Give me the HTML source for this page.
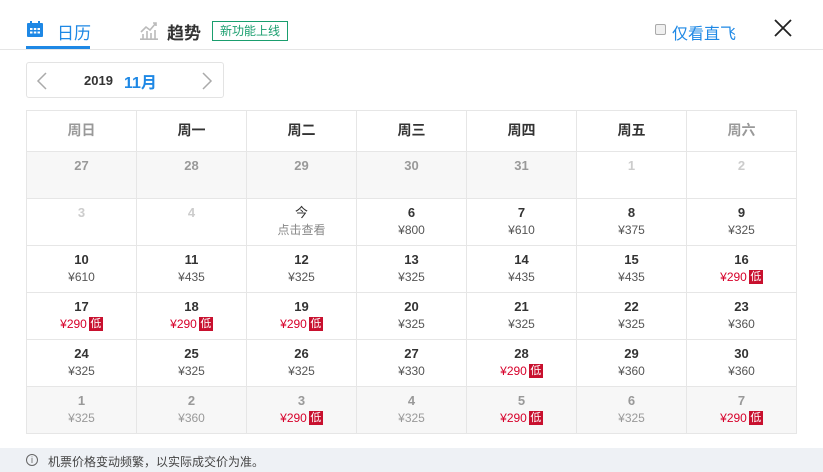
<!DOCTYPE html>
<html><head><meta charset="utf-8"><style>
*{margin:0;padding:0;box-sizing:border-box}
body{width:823px;height:472px;background:#fff;font-family:"Liberation Sans","Noto Sans CJK SC",sans-serif;position:relative;overflow:hidden;color:#333}
.a{position:absolute}
table{position:absolute;left:26px;top:110px;border-collapse:collapse;table-layout:fixed;width:770px}
td,th{border:1px solid #e6e6e6;width:110px;text-align:center;vertical-align:top;height:47px;padding-top:6px;font-size:13px;line-height:16px}
th{height:41px;font-weight:bold;font-size:14px;padding-top:11px;color:#333}
th.g{color:#999}
td b{display:block;font-size:13px;color:#333}
td span{display:block;font-size:12px;color:#555;line-height:16px;margin-top:1px;height:16px}
td.gr{background:#f7f7f7}
td.gr b,td.gr span{color:#999}
td.lt b{color:#ccc}
td span.r{color:#d7002a}
i{display:inline-block;font-style:normal;background:#c8102e;color:#fff;font-size:11px;line-height:14px;width:14px;height:14px;vertical-align:top;margin-top:1px;margin-left:2px}
</style></head><body>
<svg class="a" style="left:26px;top:20px" width="18" height="18" viewBox="0 0 18 18"><rect x="1" y="3" width="16" height="14" rx="1" fill="#1e88e5"/><rect x="4" y="1" width="2" height="4" fill="#1e88e5"/><rect x="12" y="1" width="2" height="4" fill="#1e88e5"/><g fill="#fff"><rect x="4" y="8" width="2.5" height="2"/><rect x="7.8" y="8" width="2.5" height="2"/><rect x="11.5" y="8" width="2.5" height="2"/><rect x="4" y="11.5" width="2.5" height="2"/><rect x="7.8" y="11.5" width="2.5" height="2"/><rect x="11.5" y="11.5" width="2.5" height="2"/></g></svg>
<div class="a" style="left:57px;top:19px;font-size:17px;color:#1e88e5">日历</div>
<div class="a" style="left:26px;top:46px;width:64px;height:3px;background:#1e88e5"></div>
<svg class="a" style="left:139px;top:20px" width="20" height="20" viewBox="0 0 20 20" fill="none" stroke="#bbb" stroke-width="1.6"><path d="M2 12 L7 7 L11 10 L17 3 M14 3 H17 V6"/><path d="M4 19 V14 M8 19 V11 M12 19 V13 M16 19 V10 M1 19.2 H19"/></svg>
<div class="a" style="left:167px;top:19px;font-size:17px;color:#333;font-weight:bold">趋势</div>
<div class="a" style="left:212px;top:21px;width:76px;height:20px;border:1px solid #1a9e6e;color:#1a9e6e;font-size:12px;line-height:18px;text-align:center">新功能上线</div>
<div class="a" style="left:655px;top:24px;width:11px;height:11px;border:1px solid #aaa;border-radius:2px;background:#f0f0f0"></div>
<div class="a" style="left:672px;top:20px;font-size:16px;color:#1e88e5">仅看直飞</div>
<svg class="a" style="left:773px;top:18px" width="20" height="20" viewBox="0 0 20 20" stroke="#222" stroke-width="1.8"><path d="M2 2 L18 18 M18 2 L2 18"/></svg>
<div class="a" style="left:0;top:49px;width:823px;height:1px;background:#e5e5e5"></div>
<div class="a" style="left:26px;top:62px;width:198px;height:36px;border:1px solid #e3e3e3;border-radius:3px"></div>
<svg class="a" style="left:36px;top:72px" width="12" height="18" viewBox="0 0 12 18" fill="none" stroke="#aaa" stroke-width="1.5"><path d="M10 1 L2 9 L10 17"/></svg>
<svg class="a" style="left:201px;top:72px" width="12" height="18" viewBox="0 0 12 18" fill="none" stroke="#aaa" stroke-width="1.5"><path d="M2 1 L10 9 L2 17"/></svg>
<div class="a" style="left:84px;top:73px;font-size:13px;font-weight:bold;color:#333">2019</div>
<div class="a" style="left:124px;top:69px;font-size:16px;font-weight:bold;color:#1e88e5">11月</div>
<table>
<tr><th class="g">周日</th><th>周一</th><th>周二</th><th>周三</th><th>周四</th><th>周五</th><th class="g">周六</th></tr>
<tr><td class="gr"><b>27</b></td><td class="gr"><b>28</b></td><td class="gr"><b>29</b></td><td class="gr"><b>30</b></td><td class="gr"><b>31</b></td><td class="lt"><b>1</b></td><td class="lt"><b>2</b></td></tr>
<tr><td class="lt"><b>3</b></td><td class="lt"><b>4</b></td><td><b style="font-weight:normal">今</b><span style="color:#888">点击查看</span></td><td><b>6</b><span>¥800</span></td><td><b>7</b><span>¥610</span></td><td><b>8</b><span>¥375</span></td><td><b>9</b><span>¥325</span></td></tr>
<tr><td><b>10</b><span>¥610</span></td><td><b>11</b><span>¥435</span></td><td><b>12</b><span>¥325</span></td><td><b>13</b><span>¥325</span></td><td><b>14</b><span>¥435</span></td><td><b>15</b><span>¥435</span></td><td><b>16</b><span class="r">¥290<i>低</i></span></td></tr>
<tr><td><b>17</b><span class="r">¥290<i>低</i></span></td><td><b>18</b><span class="r">¥290<i>低</i></span></td><td><b>19</b><span class="r">¥290<i>低</i></span></td><td><b>20</b><span>¥325</span></td><td><b>21</b><span>¥325</span></td><td><b>22</b><span>¥325</span></td><td><b>23</b><span>¥360</span></td></tr>
<tr><td><b>24</b><span>¥325</span></td><td><b>25</b><span>¥325</span></td><td><b>26</b><span>¥325</span></td><td><b>27</b><span>¥330</span></td><td><b>28</b><span class="r">¥290<i>低</i></span></td><td><b>29</b><span>¥360</span></td><td><b>30</b><span>¥360</span></td></tr>
<tr><td class="gr"><b>1</b><span>¥325</span></td><td class="gr"><b>2</b><span>¥360</span></td><td class="gr"><b>3</b><span class="r" style="color:#d7002a">¥290<i>低</i></span></td><td class="gr"><b>4</b><span>¥325</span></td><td class="gr"><b>5</b><span class="r" style="color:#d7002a">¥290<i>低</i></span></td><td class="gr"><b>6</b><span>¥325</span></td><td class="gr"><b>7</b><span class="r" style="color:#d7002a">¥290<i>低</i></span></td></tr>
</table>
<div class="a" style="left:0;top:448px;width:823px;height:24px;background:#eef1f5"></div>
<div class="a" style="left:26px;top:454px;width:12px;height:12px;border:1px solid #666;border-radius:50%;font-size:9px;line-height:10px;text-align:center;color:#666">i</div>
<div class="a" style="left:48px;top:453px;font-size:12px;color:#444">机票价格变动频繁，以实际成交价为准。</div>
</body></html>
